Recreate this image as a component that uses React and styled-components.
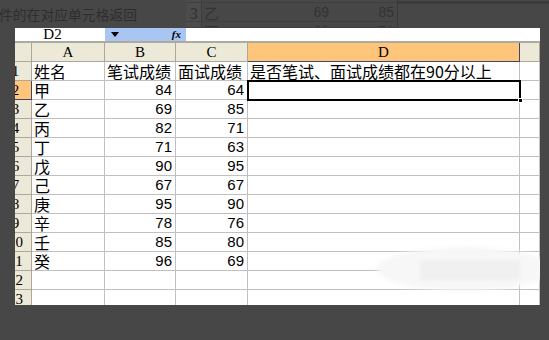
import React from "react";
import styled, { createGlobalStyle, css } from "styled-components";

const GlobalStyle = createGlobalStyle`
  html, body {
    margin: 0;
    padding: 0;
    background: #474747;
  }
  #root {
    width: 549px;
    height: 340px;
    overflow: hidden;
    position: relative;
  }
`;

const CJK = `"Noto Sans CJK SC", "Noto Sans", sans-serif`;

const Underlay = styled.div`
  display: flex;
  height: 28px;
  width: 549px;
`;

const FadedCaption = styled.div`
  width: 187px;
  margin-left: -1px;
  padding-top: 6px;
  font-family: ${CJK};
  font-size: 13.8px;
  line-height: 17px;
  color: #2e2e2e;
  white-space: nowrap;
`;

const FadedTable = styled.div`
  display: grid;
  grid-template-columns: 16px 72px 58px 65px;
  grid-template-rows: 3px 19px 6px;
  border-right: 1px solid #393939;
  align-self: flex-start;
`;

const FadedCell = styled.div`
  font-family: ${(p) => (p.$num ? `"Liberation Sans", sans-serif` : CJK)};
  font-size: ${(p) => (p.$num ? "14px" : "15px")};
  line-height: 19px;
  color: #333333;
  text-align: ${(p) => (p.$num ? "right" : "left")};
  padding: ${(p) => (p.$num ? "0 3px 0 0" : "0 0 0 2px")};
  border-bottom: 1px solid #404040;
  overflow: hidden;
  ${(p) =>
    p.$head &&
    css`
      background: #4c4c4c;
      border-right: 1px solid #3c3c3c;
      text-align: right;
      padding: 0 3px 0 0;
    `}
`;

const FadedEdge = styled.div`
  flex: 1;
  border-top: 3px solid #3b3b3b;
  margin-top: 1px;
  height: 0;
`;

const Window = styled.div`
  position: absolute;
  left: 15px;
  top: 28px;
  width: 525px;
  height: 277px;
  overflow: hidden;
  background: #ffffff;
`;

const Sheet = styled.div`
  width: 540px;
  margin-left: -15px;
  display: flex;
  flex-direction: column;
`;

const FormulaBar = styled.div`
  display: flex;
  height: 13px;
  border-bottom: 2px solid #aeab9e;
`;

const NameBox = styled.div`
  width: 105px;
  background: #ffffff;
  font-family: "Liberation Serif", serif;
  font-size: 15px;
  line-height: 13px;
  text-align: center;
  color: #000;
  overflow: hidden;
`;

const NamePicker = styled.div`
  width: 81px;
  background: #a8c6f1;
  display: flex;
  align-items: center;
  justify-content: space-between;
  padding: 0 5px 0 6px;
  box-sizing: border-box;
`;

const Arrow = styled.span`
  width: 0;
  height: 0;
  border-left: 4px solid transparent;
  border-right: 4px solid transparent;
  border-top: 5px solid #000;
`;

const Fx = styled.span`
  font-family: "Liberation Serif", serif;
  font-style: italic;
  font-weight: bold;
  font-size: 11px;
  line-height: 11px;
  color: #000;
`;

const FormulaInput = styled.div`
  flex: 1;
  background: #ffffff;
`;

const Grid = styled.div`
  display: grid;
  grid-template-columns: 32px 73px 71px 72px 272px 20px;
  grid-auto-rows: 19px;
`;

const HeadCell = styled.div`
  box-sizing: border-box;
  background: ${(p) => (p.$active ? "#fec57b" : "#ece9d8")};
  border-right: 1px solid ${(p) => (p.$active ? "#45456a" : "#aca899")};
  border-bottom: 1px solid ${(p) => (p.$active ? "#45456a" : "#aca899")};
  font-family: "Liberation Serif", serif;
  font-size: 15px;
  line-height: 19px;
  color: #000;
  text-align: center;
  overflow: hidden;
  white-space: nowrap;
`;

const Cell = styled.div`
  position: relative;
  box-sizing: border-box;
  border-right: 1px solid #c0c0c0;
  border-bottom: 1px solid #c0c0c0;
  font-family: ${(p) => (p.$num ? `"Liberation Sans", sans-serif` : CJK)};
  font-size: ${(p) => (p.$num ? "15px" : "16px")};
  line-height: 18px;
  color: #000;
  text-align: ${(p) => (p.$num ? "right" : "left")};
  padding: ${(p) => (p.$num ? "0 3px 0 0" : "0 0 0 2px")};
  white-space: nowrap;
  overflow: ${(p) => (p.$selected ? "visible" : "hidden")};
  ${(p) =>
    p.$selected &&
    css`
      border: none;
      outline: 2px solid #000;
      outline-offset: -1px;
      z-index: 1;
      &::after {
        content: "";
        position: absolute;
        right: -3px;
        bottom: -3px;
        width: 5px;
        height: 5px;
        background: #000;
        border: 1px solid #fff;
        box-sizing: border-box;
      }
    `}
`;

const Smudge = styled.div`
  position: absolute;
  left: 362px;
  top: 219px;
  width: 175px;
  height: 44px;
  border-radius: 50%;
  background: #f7f7f7;
  filter: blur(2px);
  z-index: 2;
`;

const SmudgeCore = styled.div`
  position: absolute;
  left: 405px;
  top: 232px;
  width: 100px;
  height: 20px;
  background: #f0f0f0;
  filter: blur(1px);
  z-index: 3;
`;

const rows = [
  ["甲", 84, 64],
  ["乙", 69, 85],
  ["丙", 82, 71],
  ["丁", 71, 63],
  ["戊", 90, 95],
  ["己", 67, 67],
  ["庚", 95, 90],
  ["辛", 78, 76],
  ["壬", 85, 80],
  ["癸", 96, 69],
];

export default function App() {
  return (
    <>
      <GlobalStyle />
      <Underlay>
        <FadedCaption>件的在对应单元格返回</FadedCaption>
        <FadedTable>
          <FadedCell $head />
          <FadedCell />
          <FadedCell $num />
          <FadedCell $num />
          <FadedCell $head>3</FadedCell>
          <FadedCell>乙</FadedCell>
          <FadedCell $num>69</FadedCell>
          <FadedCell $num>85</FadedCell>
          <FadedCell $head>4</FadedCell>
          <FadedCell>丙</FadedCell>
          <FadedCell $num>82</FadedCell>
          <FadedCell $num>71</FadedCell>
        </FadedTable>
        <FadedEdge />
      </Underlay>

      <Window>
        <Sheet>
          <FormulaBar>
            <NameBox>D2</NameBox>
            <NamePicker>
              <Arrow />
              <Fx>fx</Fx>
            </NamePicker>
            <FormulaInput />
          </FormulaBar>

          <Grid>
            <HeadCell />
            <HeadCell>A</HeadCell>
            <HeadCell>B</HeadCell>
            <HeadCell>C</HeadCell>
            <HeadCell $active>D</HeadCell>
            <HeadCell />

            <HeadCell>1</HeadCell>
            <Cell>姓名</Cell>
            <Cell>笔试成绩</Cell>
            <Cell>面试成绩</Cell>
            <Cell>是否笔试、面试成绩都在90分以上</Cell>
            <Cell />

            {rows.map(([name, a, b], i) => (
              <React.Fragment key={name}>
                <HeadCell $active={i === 0}>{i + 2}</HeadCell>
                <Cell>{name}</Cell>
                <Cell $num>{a}</Cell>
                <Cell $num>{b}</Cell>
                <Cell $selected={i === 0} />
                <Cell />
              </React.Fragment>
            ))}

            {[12, 13].map((n) => (
              <React.Fragment key={n}>
                <HeadCell>{n}</HeadCell>
                <Cell />
                <Cell />
                <Cell />
                <Cell />
                <Cell />
              </React.Fragment>
            ))}
          </Grid>
        </Sheet>
        <Smudge />
        <SmudgeCore />
      </Window>
    </>
  );
}
